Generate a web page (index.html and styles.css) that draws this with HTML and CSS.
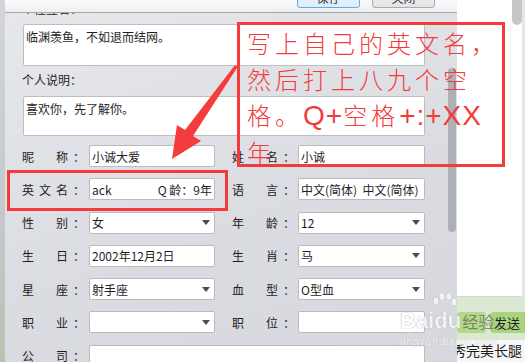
FILE: index.html
```html
<html>
<head>
    <meta charset="utf-8">
    <link rel="stylesheet" href="styles.css">
</head>
<body>

<div class="screen">
  <div class="edge"></div>

  <div class="dialog">
    <div class="topbar">
      <button class="btn btn-primary">保存</button>
      <button class="btn">关闭</button>
    </div>
    <div class="dialog-body">
      <div class="form">
        <div class="caption caption-cut">个性签名：</div>
        <div class="area">临渊羡鱼，不如退而结网。</div>
        <div class="caption caption-mid">个人说明：</div>
        <div class="area area-short">喜欢你，先了解你。</div>

        <div class="grid">
          <div class="lbl">昵　称：</div>
          <div class="field"><span>小诚大爱</span></div>
          <div class="lbl r">姓　名：</div>
          <div class="field"><span>小诚</span></div>

          <div class="lbl">英文名：</div>
          <div class="field"><span>ack</span><span>Q 龄：9年</span></div>
          <div class="lbl r">语　言：</div>
          <div class="field"><span>中文(简体)&nbsp;&nbsp;中文(简体)</span></div>

          <div class="lbl">性　别：</div>
          <div class="field select"><span>女</span></div>
          <div class="lbl r">年　龄：</div>
          <div class="field select"><span>12</span></div>

          <div class="lbl">生　日：</div>
          <div class="field"><span>2002年12月2日</span></div>
          <div class="lbl r">生　肖：</div>
          <div class="field select"><span>马</span></div>

          <div class="lbl">星　座：</div>
          <div class="field select"><span>射手座</span></div>
          <div class="lbl r">血　型：</div>
          <div class="field select"><span>O型血</span></div>

          <div class="lbl">职　业：</div>
          <div class="field select"><span></span></div>
          <div class="lbl r">职　位：</div>
          <div class="field"><span></span></div>

          <div class="lbl">公　司：</div>
          <div class="field wide"><span></span></div>
        </div>
      </div>
      <div class="scroll"><div class="thumb"></div></div>
    </div>
  </div>

  <div class="side">
    <div class="chat">
      <div class="chat-body"></div>
      <div class="chat-scroll"><div class="chat-thumb"></div></div>
    </div>
    <div class="sendbar">
      <div class="sbtn face"></div>
      <div class="sbtn send">发送</div>
    </div>
    <div class="msg">秀完美长腿</div>
  </div>

  <!-- annotation drawn over the screenshot -->
  <div class="note">
    <div class="note-line">写上自己的英文名，</div>
    <div class="note-line">然后打上八九个空</div>
    <div class="note-line">格。<span class="latin">Q+</span>空格<span class="latin">+:+XX</span></div>
    <div class="note-line">年</div>
  </div>
  <div class="hilite"></div>

  <svg class="arrow" width="525" height="362" viewBox="0 0 525 362">
    <polygon points="235,65 237.5,67 193,136 201,141 172,159 177,125 185,130" fill="#f43c3c"/>
  </svg>

  <div class="mark">
    <svg class="paw" width="28" height="22" viewBox="0 0 28 22">
      <ellipse cx="6" cy="9" rx="3" ry="4" fill="#fff" stroke="#c9cbce"/>
      <ellipse cx="12" cy="4.5" rx="3" ry="4" fill="#fff" stroke="#c9cbce"/>
      <ellipse cx="19" cy="4.5" rx="3" ry="4" fill="#fff" stroke="#c9cbce"/>
      <ellipse cx="24" cy="10" rx="3" ry="4" fill="#fff" stroke="#c9cbce"/>
    </svg>
    <div class="mark-logo"><span class="mark-bai">Bai</span><span class="mark-du">du</span><span class="mark-jy">经验</span></div>
    <div class="mark-url">jingyan.baidu.com</div>
  </div>
</div>

</body>
</html>
```

FILE: styles.css
```css
* {
  margin: 0px;
  padding: 0px;
  box-sizing: border-box;
}
body {
  width: 525px;
  height: 362px;
  overflow: hidden;
  font-family: "Noto Sans CJK SC", "Liberation Sans", sans-serif;
  color: #1e1e1e;
}
.screen {
  position: relative;
  display: flex;
  width: 525px;
  height: 362px;
  overflow: hidden;
  background: #e4e6e8;
}
.edge {
  width: 5px;
  background: linear-gradient(#d3d5d9, #c4c8cc 60%, #b9c3b0);
}

/* dialog */
.dialog {
  width: 452px;
  display: flex;
  flex-direction: column;
  background: linear-gradient(160deg, #e7e8ec, #dadce1 60%, #d6d8dd);
}
.topbar {
  height: 13px;
  flex-shrink: 0;
  display: flex;
  justify-content: flex-end;
  gap: 12px;
  padding-right: 22px;
  border-bottom: 1px solid #a4a7ac;
  background: linear-gradient(#fbfbfb, #eeeff1);
  overflow: hidden;
}
.btn {
  width: 63px;
  height: 21px;
  margin-top: -13px;
  border: 1px solid #a9abae;
  border-radius: 3px;
  background: linear-gradient(#f7f7f7, #e3e3e3);
  font: 12px "Noto Sans CJK SC", sans-serif;
  color: #333;
}
.btn-primary {
  border-color: #58aee6;
  background: linear-gradient(#f0f7fd, #dcecf8);
}
.dialog-body {
  flex: 1;
  display: flex;
  min-height: 0;
}
.form {
  flex: 1;
  overflow: hidden;
  padding-left: 17px;
}
.caption {
  font-size: 12px;
  line-height: 18px;
}
.caption-cut {
  margin-top: -13px;
}
.caption-mid {
  margin-top: 5px;
}
.area {
  margin: 6px 0 0 1px;
  width: 402px;
  height: 42px;
  padding: 3px 2px;
  background: #fff;
  border: 1px solid #bcbec2;
  border-radius: 2px;
  font-size: 12px;
  line-height: 18px;
}
.area-short {
  margin-top: 7px;
  height: 40px;
}
.grid {
  display: grid;
  grid-template-columns: 67px 126px 83px 127px;
  grid-auto-rows: 22px;
  row-gap: 11.3px;
  margin-top: 9px;
}
.lbl {
  display: flex;
  align-items: center;
  font-size: 12px;
  letter-spacing: 5px;
  white-space: nowrap;
}
.lbl.r {
  padding-left: 17px;
}
.field {
  display: flex;
  align-items: center;
  justify-content: space-between;
  padding: 0 2px;
  background: #fff;
  border: 1px solid #b9bbbf;
  border-radius: 2px;
  font-size: 12px;
  white-space: nowrap;
  overflow: hidden;
}
.field.select::after {
  content: '';
  margin-right: 2px;
  border-left: 4px solid transparent;
  border-right: 4px solid transparent;
  border-top: 5px solid #4b4b4b;
}
.field.wide {
  grid-column: 2 / 5;
}
.scroll {
  width: 10px;
  padding: 55px 1px 0;
}
.thumb {
  height: 164px;
  border-radius: 4px;
  background: #adb0b5;
}

/* chat window behind */
.side {
  flex: 1;
  display: flex;
  flex-direction: column;
  min-width: 0;
}
.chat {
  height: 297px;
  display: flex;
  margin-right: 3px;
  background: #fff;
  border-bottom: 1px solid #d3d6d2;
}
.chat-body {
  flex: 1;
}
.chat-scroll {
  width: 10px;
}
.chat-thumb {
  height: 25px;
  border-radius: 0 0 5px 5px;
  background: #c6c7c9;
}
.sendbar {
  height: 43px;
  display: flex;
  gap: 4px;
  padding-top: 15px;
  background: #dce8d1;
  overflow: hidden;
}
.sbtn {
  flex-shrink: 0;
  height: 21px;
  border-radius: 4px;
  background: #b4d98d;
  font-size: 13px;
  line-height: 21px;
  padding-left: 4px;
}
.face {
  width: 29px;
}
.send {
  width: 44px;
  background: #a9d37e;
}
.msg {
  flex: 1;
  overflow: hidden;
  white-space: nowrap;
  text-indent: -5px;
  font-size: 14px;
  line-height: 20px;
  background: #f6f7f6;
}

/* red annotation */
.note {
  position: absolute;
  left: 237px;
  top: 22px;
  width: 268px;
  height: 145px;
  padding-left: 7px;
  border: 3px solid #f43a3a;
  color: #f43b3b;
  font-size: 24px;
  line-height: 36px;
  letter-spacing: 4px;
  white-space: nowrap;
  font-weight: 300;
}
.note .latin {
  font-family: "Liberation Sans", sans-serif;
  font-size: 28px;
  letter-spacing: 1px;
  font-weight: normal;
}
.hilite {
  position: absolute;
  left: 7px;
  top: 170px;
  width: 221px;
  height: 41px;
  border: 3px solid #f43a3a;
}
.arrow {
  position: absolute;
  left: 0;
  top: 0;
}

/* watermark */
.mark {
  position: absolute;
  left: 400px;
  top: 292px;
  display: flex;
  flex-direction: column;
  opacity: 0.7;
}
.paw {
  margin-left: 30px;
}
.mark-logo {
  display: flex;
  align-items: baseline;
  margin-top: -4px;
  font-family: "Liberation Sans", sans-serif;
  font-weight: bold;
  font-size: 22px;
  line-height: 22px;
}
.mark-bai,
.mark-du {
  color: #fff;
  text-shadow: 0 0 1px #9a9da2, 0 0 1px #9a9da2;
}
.mark-jy {
  margin-left: 1px;
  font-family: "Noto Sans CJK SC", sans-serif;
  font-weight: normal;
  font-size: 16px;
  color: rgba(60, 60, 60, 0.75);
}
.mark-url {
  margin-top: 4px;
  font-family: "Liberation Sans", sans-serif;
  font-size: 10px;
  letter-spacing: 1px;
  color: #fff;
  text-shadow: 0 0 1px #a0a3a8;
}
```
